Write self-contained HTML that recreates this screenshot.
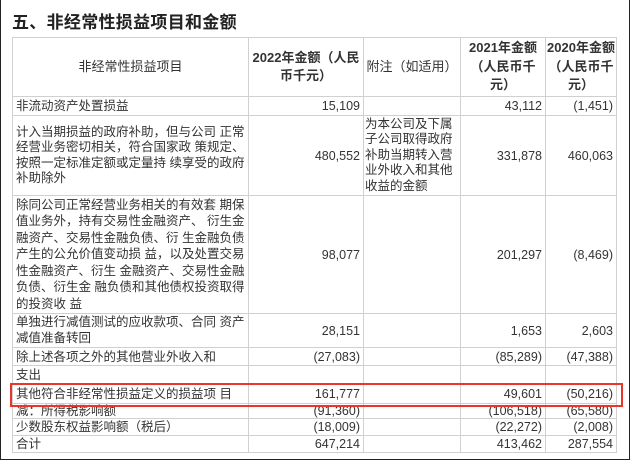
<!DOCTYPE html>
<html><head><meta charset="utf-8"><style>
html,body{margin:0;padding:0;background:#fff;}
body{width:630px;height:462px;position:relative;overflow:hidden;font-family:"Liberation Sans","Noto Sans CJK SC",sans-serif;color:#333;}
.frame{position:absolute;left:0;top:0;width:628px;height:459px;border:1px solid #222;border-top:none;}
h1{position:absolute;left:12px;top:8px;margin:0;font-size:17px;font-weight:bold;color:#222;letter-spacing:0.3px;}
table{position:absolute;left:12px;top:37px;border-collapse:collapse;table-layout:fixed;font-size:12.5px;}
td{border:1px solid #d0d0d0;padding:0 3px;vertical-align:middle;line-height:14px;white-space:nowrap;overflow:hidden;}
td.n{text-align:right;}
th{border:1px solid #d0d0d0;font-weight:bold;font-size:13px;line-height:18.5px;padding:0;text-align:center;color:#333;}
.m{line-height:15.5px;}
.red{position:absolute;left:10px;top:383px;width:609px;height:20px;border:2px solid #e8372a;}
</style></head><body>
<div class="frame"></div>
<h1>五、非经常性损益项目和金额</h1>
<table>
<colgroup><col style="width:236px"><col style="width:115px"><col style="width:97px"><col style="width:85px"><col style="width:71px"></colgroup>
<tr style="height:59px"><th style="font-weight:normal">非经常性损益项目</th><th>2022年金额（人民<br>币千元）</th><th style="font-weight:normal">附注（如适用）</th><th>2021年金额<br>（人民币千<br>元）</th><th>2020年金额<br>（人民币千<br>元）</th></tr>
<tr style="height:19px"><td>非流动资产处置损益</td><td class="n">15,109</td><td></td><td class="n">43,112</td><td class="n">(1,451)</td></tr>
<tr style="height:80px"><td class="m">计入当期损益的政府补助，但与公司 正常<br>经营业务密切相关，符合国家政 策规定、<br>按照一定标准定额或定量持 续享受的政府<br>补助除外</td><td class="n">480,552</td><td class="m" style="padding:0 1px">为本公司及下属<br>子公司取得政府<br>补助当期转入营<br>业外收入和其他<br>收益的金额</td><td class="n">331,878</td><td class="n">460,063</td></tr>
<tr style="height:118px"><td style="line-height:16.5px">除同公司正常经营业务相关的有效套 期保<br>值业务外，持有交易性金融资产、 衍生金<br>融资产、交易性金融负债、衍 生金融负债<br>产生的公允价值变动损 益，以及处置交易<br>性金融资产、衍生 金融资产、交易性金融<br>负债、衍生金 融负债和其他债权投资取得<br>的投资收 益</td><td class="n">98,077</td><td></td><td class="n">201,297</td><td class="n">(8,469)</td></tr>
<tr style="height:34px"><td class="m">单独进行减值测试的应收款项、合同 资产<br>减值准备转回</td><td class="n">28,151</td><td></td><td class="n">1,653</td><td class="n">2,603</td></tr>
<tr style="height:18px"><td>除上述各项之外的其他营业外收入和</td><td class="n">(27,083)</td><td></td><td class="n">(85,289)</td><td class="n">(47,388)</td></tr>
<tr style="height:18px"><td>支出</td><td></td><td></td><td></td><td></td></tr>
<tr style="height:20px"><td>其他符合非经常性损益定义的损益项 目</td><td class="n">161,777</td><td></td><td class="n">49,601</td><td class="n">(50,216)</td></tr>
<tr style="height:15px"><td>减：所得税影响额</td><td class="n">(91,360)</td><td></td><td class="n">(106,518)</td><td class="n">(65,580)</td></tr>
<tr style="height:17px"><td>少数股东权益影响额（税后）</td><td class="n">(18,009)</td><td></td><td class="n">(22,272)</td><td class="n">(2,008)</td></tr>
<tr style="height:17px"><td>合计</td><td class="n">647,214</td><td></td><td class="n">413,462</td><td class="n">287,554</td></tr>
</table>
<div class="red"></div>
</body></html>
